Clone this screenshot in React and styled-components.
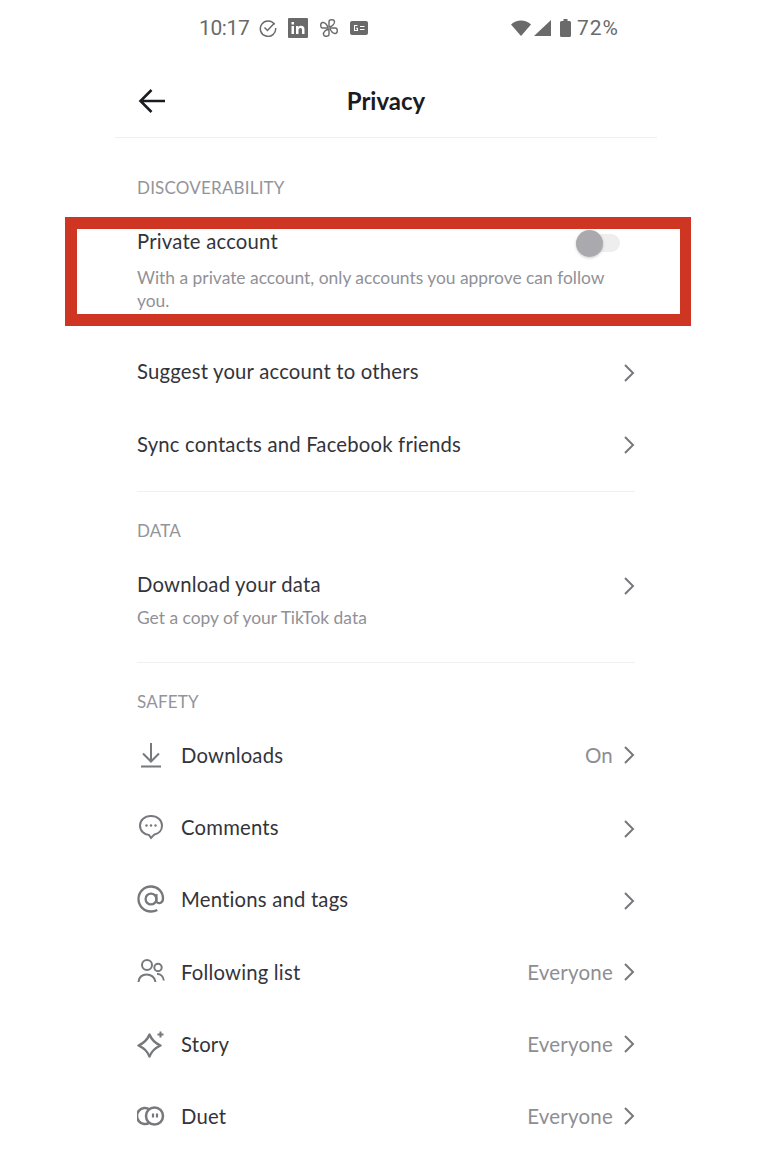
import styled, { createGlobalStyle } from 'styled-components'

const GlobalStyle = createGlobalStyle`
  html, body {
    margin: 0;
    padding: 0;
    background: #fff;
  }
  body {
    font-family: Lato, 'Liberation Sans', sans-serif;
    color: #2f3036;
  }
`

const Page = styled.div`
  position: relative;
  width: 768px;
  height: 1152px;
  overflow: hidden;
  background: #fff;
`

const StatusBar = styled.div`
  display: flex;
  align-items: center;
  justify-content: space-between;
  height: 56px;
  padding: 0 150px 0 199px;
  color: #6a6a6a;
  font-family: Roboto, sans-serif;
  font-size: 21px;
`

const StatusGroup = styled.div`
  display: flex;
  align-items: center;
  gap: ${({ $gap }) => $gap}px;
`

const Clock = styled.span`
  letter-spacing: -0.4px;
  margin-right: -1px;
`

const BatteryLevel = styled.span`
  letter-spacing: 1px;
  margin-right: -1px;
`

const BatterySlot = styled.div`
  display: flex;
  margin: 0 3px 0 6px;
`

const Header = styled.header`
  display: flex;
  align-items: center;
  justify-content: center;
  position: relative;
  height: 82px;
  padding-top: 7px;
  box-sizing: border-box;
  margin: 0 111px 0 115px;
  border-bottom: 1px solid #eeeeef;
`

const BackButton = styled.div`
  position: absolute;
  left: 23px;
  top: 32px;
  display: flex;
`

const Title = styled.h1`
  margin: 0;
  font-size: 24px;
  font-weight: 700;
  color: #1b1c22;
`

const Content = styled.main`
  margin: 0 133px 0 137px;
`

const SectionLabel = styled.div`
  height: 20px;
  padding-top: ${({ $top }) => $top}px;
  margin-bottom: ${({ $bottom }) => $bottom || 0}px;
  font-size: 17px;
  line-height: 20px;
  letter-spacing: 0.2px;
  color: #93949b;
`

const Divider = styled.hr`
  margin: ${({ $top }) => $top}px 0 0;
  border: 0;
  border-top: 1px solid #f0f0f1;
`

const Row = styled.div`
  display: flex;
  align-items: center;
  height: ${({ $height }) => $height || 72.2}px;
`

const RowIcon = styled.div`
  display: flex;
  width: 28px;
  margin-right: 16px;
  color: #77787c;
`

const RowLabel = styled.div`
  flex: 1;
  font-size: 20.3px;
  letter-spacing: 0.2px;
  color: #33343a;
`

const RowValue = styled.div`
  margin-right: 10px;
  font-size: 20.5px;
  letter-spacing: 0.2px;
  color: #8d8e93;
`

const Chevron = styled.svg`
  flex: none;
  margin-top: ${({ $drop }) => ($drop ? 3 : 0)}px;
  color: #77787c;
`

const PrivateBlock = styled.div`
  padding-top: 29px;
  height: 108px;
`

const PrivateTop = styled.div`
  display: flex;
  align-items: center;
  justify-content: space-between;
  padding-right: 15px;
  height: 28px;
`

const Switch = styled.div`
  position: relative;
  width: 44px;
  height: 18px;
  margin-top: 4px;
  border-radius: 9px;
  background: #eeeeef;
`

const Knob = styled.div`
  position: absolute;
  left: 0;
  top: -4px;
  width: 27px;
  height: 27px;
  border-radius: 50%;
  background: #a9a9ae;
  box-shadow: 0 1px 3px rgba(0, 0, 0, 0.2);
`

const Description = styled.p`
  margin: ${({ $top }) => $top || 0}px 0 0;
  max-width: 480px;
  font-size: 17.4px;
  line-height: 23px;
  color: #909197;
`

const Highlight = styled.div`
  position: absolute;
  left: 65px;
  top: 217px;
  width: 626px;
  height: 109px;
  box-sizing: border-box;
  border: solid #ce3522;
  border-width: 12px 11px 12px 12px;
  pointer-events: none;
`

const ChevronIcon = ({ drop }) => (
  <Chevron $drop={drop} width="12" height="20" viewBox="0 0 12 20" fill="none">
    <path d="M2 2l8 8-8 8" stroke="currentColor" strokeWidth="2" />
  </Chevron>
)

const NavRow = ({ icon, label, value, height }) => (
  <Row $height={height}>
    {icon && <RowIcon>{icon}</RowIcon>}
    <RowLabel>{label}</RowLabel>
    {value && <RowValue>{value}</RowValue>}
    <ChevronIcon drop={!value} />
  </Row>
)

const iconProps = {
  width: 28,
  height: 28,
  viewBox: '0 0 28 28',
  fill: 'none',
  stroke: 'currentColor',
  strokeWidth: 2,
}

const DownloadIcon = () => (
  <svg {...iconProps}>
    <path d="M14 2v18M6 12.5l8 8 8-8M4 25.5h20" />
  </svg>
)

const CommentIcon = () => (
  <svg {...iconProps}>
    <path d="M14 3C7.6 3 3 7 3 12.5S7.6 22 12 22l2 3 3.5-3.6C22 20.6 25 17 25 12.5 25 7 20.4 3 14 3z" />
    <circle cx="9.5" cy="12.5" r="1.2" fill="currentColor" stroke="none" />
    <circle cx="14" cy="12.5" r="1.2" fill="currentColor" stroke="none" />
    <circle cx="18.5" cy="12.5" r="1.2" fill="currentColor" stroke="none" />
  </svg>
)

const MentionIcon = () => (
  <svg {...iconProps} strokeWidth="2.3">
    <circle cx="14" cy="14" r="5.4" />
    <path d="M19.4 9v6.5c0 4 6.6 3.5 6.6-2C26 6.5 20.5 1.5 14 1.5 7 1.5 1.5 7 1.5 14S7 26.500 14 26.500c2.500 0 4.500-.6 6.300-1.600" />
  </svg>
)

const FollowingIcon = () => (
  <svg {...iconProps}>
    <circle cx="10" cy="7" r="5" />
    <circle cx="21" cy="9.5" r="3.7" />
    <path d="M1.5 24c0-10 16-10 17 0M20 16c3.500-.3 6.500 2.500 6.800 6.500" />
  </svg>
)

const StoryIcon = () => (
  <svg {...iconProps} strokeWidth="2.4" strokeLinejoin="round">
    <path d="M12.5 4.5Q15.5 12 23.5 15.5 15.5 19 12.5 26.5 9.5 19 1.5 15.5 9.5 12 12.5 4.5z" />
    <path d="M23.5 1.5v6M20.5 4.5h6" strokeWidth="2" />
  </svg>
)

const DuetIcon = () => (
  <svg {...iconProps} strokeWidth="2.5">
    <circle cx="17.5" cy="14" r="8.5" />
    <path d="M12.5 7.4A8 8 0 1 0 12.5 20.6" />
    <path d="M16 11.5v4M20 11.5v4" strokeWidth="2.2" />
  </svg>
)

const CheckCircle = () => (
  <svg width="18" height="18" viewBox="0 0 18 18" fill="none" stroke="currentColor" strokeWidth="1.5">
    <path d="M15.5 5.5A7.7 7.7 0 1 0 16.7 9" />
    <path d="M5.5 8.5l3 3 7-7.5" />
  </svg>
)

const LinkedInIcon = () => (
  <svg width="20" height="20" viewBox="0 0 20 20">
    <rect width="20" height="20" rx="1" fill="currentColor" />
    <path d="M3.5 8H6v8H3.500zM3.500 4H6v2.500H3.500zM8 8h2.400v1.200C11 8.300 12 7.800 13.200 7.800c2.300 0 3.300 1.300 3.300 3.700V16H14v-4c0-1.300-.4-2-1.500-2s-2 .8-2 2.200V16H8z" fill="#fff" />
  </svg>
)

const PinwheelIcon = () => (
  <svg width="20" height="20" viewBox="0 0 20 20" fill="none" stroke="currentColor" strokeWidth="1.4" strokeLinejoin="round">
    <path d="M10 9V3.500C10 1.500 15 .8 15.500 3.500 16 6 13 8.500 10 9z" />
    <path d="M11 10h5.500c2 0 2.700 5 0 5.500C14 16 11.500 13 11 10z" />
    <path d="M10 11v5.500c0 2-5 2.700-5.500 0C4 14 7 11.500 10 11z" />
    <path d="M9 10H3.500c-2 0-2.700-5 0-5.500C6 4 8.500 7 9 10z" />
  </svg>
)

const NewsIcon = () => (
  <svg width="18" height="14" viewBox="0 0 18 14">
    <rect width="18" height="14" rx="2" fill="currentColor" />
    <path d="M7.5 4.5h-3v5h3V7.200H6M10 5.500h4.500M10 8.500h4.500" fill="none" stroke="#fff" strokeWidth="1.1" />
  </svg>
)

const WifiIcon = () => (
  <svg width="20" height="16" viewBox="0 0 20 16">
    <path d="M0 4.500C5.500-1 14.500-1 20 4.500L10 16z" fill="currentColor" />
  </svg>
)

const SignalIcon = () => (
  <svg width="17" height="16" viewBox="0 0 17 16">
    <path d="M17 0v16H0z" fill="currentColor" />
  </svg>
)

const BatteryIcon = () => (
  <svg width="11" height="18" viewBox="0 0 11 18" fill="currentColor">
    <path d="M3.5 0h4v2h2A1.500 1.500 0 0 1 11 3.500v13A1.500 1.500 0 0 1 9.500 18h-8A1.500 1.500 0 0 1 0 16.500v-13A1.500 1.500 0 0 1 1.500 2h2z" />
  </svg>
)

export default function App() {
  return (
    <Page>
      <GlobalStyle />
      <StatusBar>
        <StatusGroup $gap={11}>
          <Clock>10:17</Clock>
          <CheckCircle />
          <LinkedInIcon />
          <PinwheelIcon />
          <NewsIcon />
        </StatusGroup>
        <StatusGroup $gap={3}>
          <WifiIcon />
          <SignalIcon />
          <BatterySlot>
            <BatteryIcon />
          </BatterySlot>
          <BatteryLevel>72%</BatteryLevel>
        </StatusGroup>
      </StatusBar>
      <Header>
        <BackButton>
          <svg width="28" height="26" viewBox="0 0 28 26" fill="none" stroke="#1b1c22" strokeWidth="2.6">
            <path d="M27 13H3M13.5 2 2.5 13l11 11" />
          </svg>
        </BackButton>
        <Title>Privacy</Title>
      </Header>
      <Content>
        <SectionLabel $top={40}>DISCOVERABILITY</SectionLabel>
        <PrivateBlock>
          <PrivateTop>
            <RowLabel>Private account</RowLabel>
            <Switch>
              <Knob />
            </Switch>
          </PrivateTop>
          <Description $top={11}>
            With a private account, only accounts you approve can follow you.
          </Description>
        </PrivateBlock>
        <NavRow label="Suggest your account to others" height={72} />
        <NavRow label="Sync contacts and Facebook friends" height={73} />
        <Divider $top={11} />
        <SectionLabel $top={29} $bottom={22}>DATA</SectionLabel>
        <Row $height={42}>
          <RowLabel>Download your data</RowLabel>
          <ChevronIcon drop />
        </Row>
        <Description $top={1}>Get a copy of your TikTok data</Description>
        <Divider $top={33} />
        <SectionLabel $top={29} $bottom={7}>SAFETY</SectionLabel>
        <NavRow icon={<DownloadIcon />} label="Downloads" value="On" />
        <NavRow icon={<CommentIcon />} label="Comments" />
        <NavRow icon={<MentionIcon />} label="Mentions and tags" />
        <NavRow icon={<FollowingIcon />} label="Following list" value="Everyone" />
        <NavRow icon={<StoryIcon />} label="Story" value="Everyone" />
        <NavRow icon={<DuetIcon />} label="Duet" value="Everyone" />
      </Content>
      <Highlight />
    </Page>
  )
}
